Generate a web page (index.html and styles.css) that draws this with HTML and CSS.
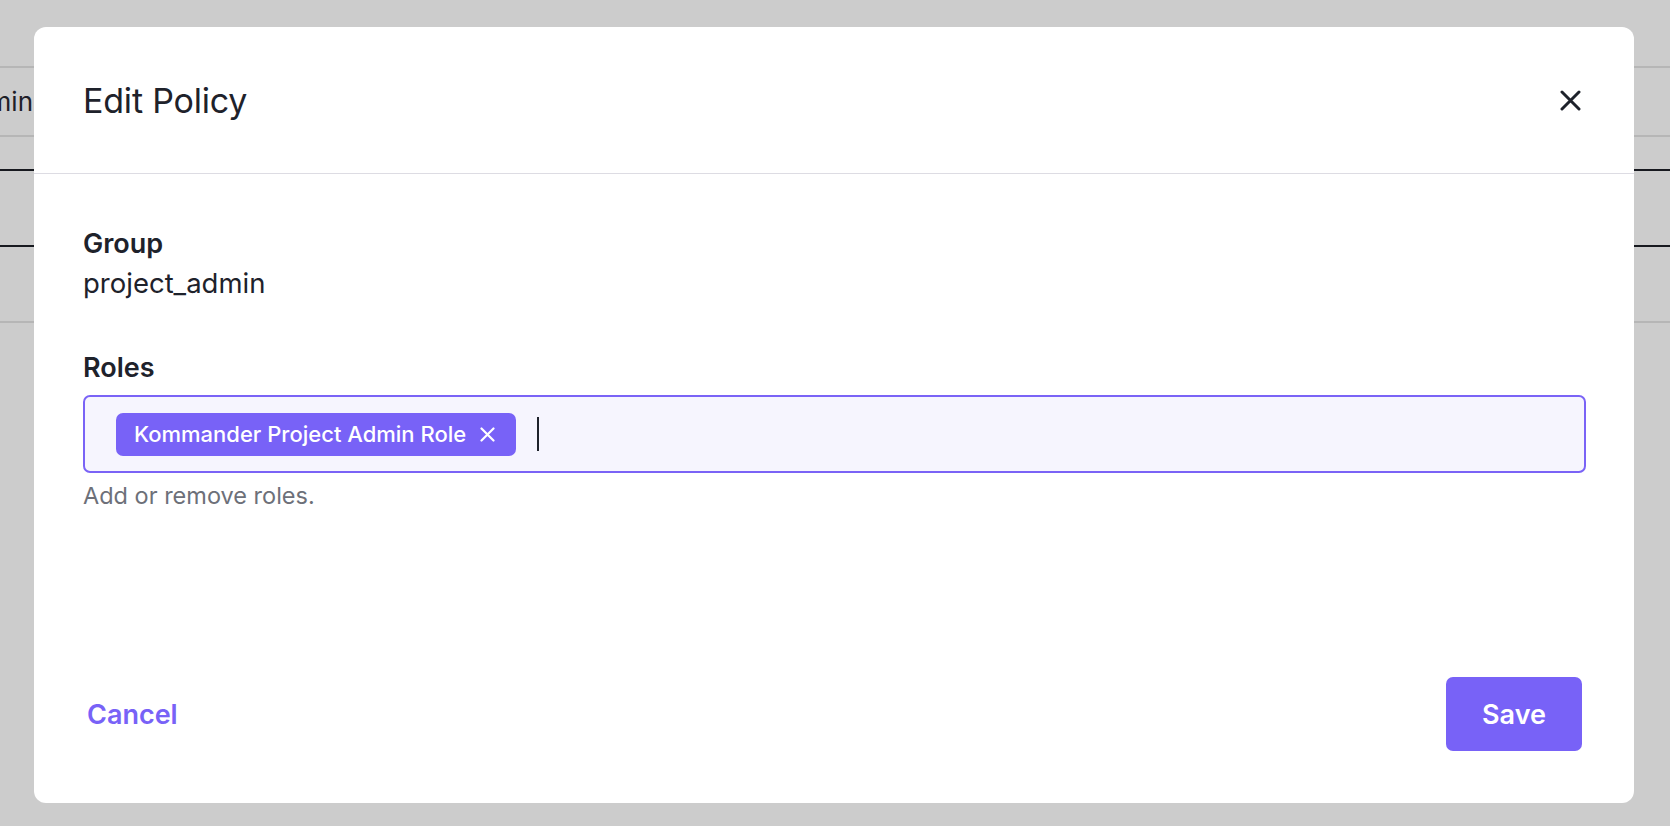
FILE: index.html
```html
<!DOCTYPE html>
<html lang="en">
<head>
<meta charset="utf-8">
<title>Edit Policy</title>
<link rel="stylesheet" href="styles.css">
</head>
<body>
<div class="page">
  <div class="row row-top">
    <div class="cell-clip"><span>project_admin</span></div>
  </div>
  <div class="row row-mid"></div>
  <div class="row row-dark"></div>
  <div class="row row-last"></div>
</div>

<div class="modal" role="dialog" aria-labelledby="modal-title">
  <header class="modal-header">
    <h2 id="modal-title" class="modal-title">Edit Policy</h2>
    <button class="close-btn" aria-label="Close">
      <svg width="21" height="21" viewBox="0 0 21 21" fill="none" stroke="currentColor" stroke-width="3" stroke-linecap="round">
        <path d="M2 2 L19 19 M19 2 L2 19"/>
      </svg>
    </button>
  </header>
  <div class="modal-body">
    <div class="field">
      <div class="field-label">Group</div>
      <div class="field-value">project_admin</div>
    </div>
    <div class="field field-roles">
      <div class="field-label">Roles</div>
      <div class="tag-input">
        <span class="chip">Kommander Project Admin Role
          <svg class="chip-x" width="15" height="15" viewBox="0 0 15 15" fill="none" stroke="currentColor" stroke-width="2.2" stroke-linecap="round">
            <path d="M1.5 1.5 L13.5 13.5 M13.5 1.5 L1.5 13.5"/>
          </svg>
        </span>
        <span class="caret"></span>
      </div>
      <div class="helper">Add or remove roles.</div>
    </div>
  </div>
  <footer class="modal-footer">
    <button class="btn-link">Cancel</button>
    <button class="btn-primary">Save</button>
  </footer>
</div>
</body>
</html>
```

FILE: styles.css
```css
* { box-sizing: border-box; }
html, body {
  margin: 0;
  padding: 0;
  height: 826px;
  overflow: hidden;
}
body {
  background: #cccccc;
  font-family: Inter, "Noto Sans", "Liberation Sans", sans-serif;
  color: #1e222b;
}

/* background page (behind overlay) */
.page {
  padding-top: 66px;
}
.row {
  width: 100%;
}
.row-top {
  height: 71px;
  border-top: 2px solid #b6b6b6;
  border-bottom: 2px solid #b6b6b6;
  display: flex;
  align-items: center;
}
.cell-clip {
  width: 34px;
  overflow: hidden;
  display: flex;
  justify-content: flex-end;
  white-space: nowrap;
  font-size: 26px;
  color: #1e2028;
  padding-right: 1px;
}
.row-mid {
  height: 34px;
  border-bottom: 2px solid #17191f;
}
.row-dark {
  height: 76px;
  border-bottom: 2px solid #17191f;
}
.row-last {
  height: 76px;
  border-bottom: 2px solid #b6b6b6;
}

/* modal */
.modal {
  position: absolute;
  top: 27px;
  left: 34px;
  width: 1600px;
  height: 776px;
  background: #ffffff;
  border-radius: 12px;
  display: flex;
  flex-direction: column;
}
.modal-header {
  height: 147px;
  border-bottom: 1px solid #dddce3;
  display: flex;
  align-items: center;
  justify-content: space-between;
  padding: 0 53px 0 49px;
  flex-shrink: 0;
}
.modal-title {
  margin: 0;
  font-size: 34px;
  font-weight: 400;
  color: #1e222b;
  letter-spacing: -0.2px;
}
.close-btn {
  width: 21px;
  height: 21px;
  padding: 0;
  border: 0;
  background: none;
  color: #1e222b;
  display: flex;
}

.modal-body {
  flex: 1;
  padding: 52px 48px 0 49px;
}
.field-label {
  font-size: 27px;
  line-height: 36px;
  font-weight: 600;
  color: #1e222b;
}
.field-value {
  font-size: 27.5px;
  line-height: 36px;
  margin-top: 3px;
}
.field-roles {
  margin-top: 49px;
}
.field-roles .field-label {
  margin-bottom: 9px;
}
.tag-input {
  height: 78px;
  border: 2px solid #7a63f6;
  border-radius: 7px;
  background: #f6f5fe;
  display: flex;
  align-items: center;
  padding-left: 31px;
  gap: 21px;
}
.chip {
  height: 43px;
  background: #7862f7;
  color: #ffffff;
  border-radius: 7px;
  display: inline-flex;
  align-items: center;
  gap: 14px;
  padding: 0 21px 0 18px;
  font-size: 22px;
  font-weight: 500;
}
.chip-x {
  display: block;
}
.caret {
  width: 2px;
  height: 34px;
  background: #1e222b;
}
.helper {
  margin-top: 8px;
  font-size: 23.5px;
  line-height: 30px;
  color: #6d7079;
}

.modal-footer {
  display: flex;
  justify-content: space-between;
  align-items: center;
  padding: 0 52px 52px 49px;
}
.btn-link {
  border: 0;
  background: none;
  font-family: inherit;
  font-size: 27px;
  font-weight: 600;
  color: #7862f7;
  padding: 0 4px;
}
.btn-primary {
  width: 136px;
  height: 74px;
  border: 0;
  border-radius: 7px;
  background: #7862f7;
  color: #ffffff;
  font-family: inherit;
  font-size: 27px;
  font-weight: 600;
}
```
